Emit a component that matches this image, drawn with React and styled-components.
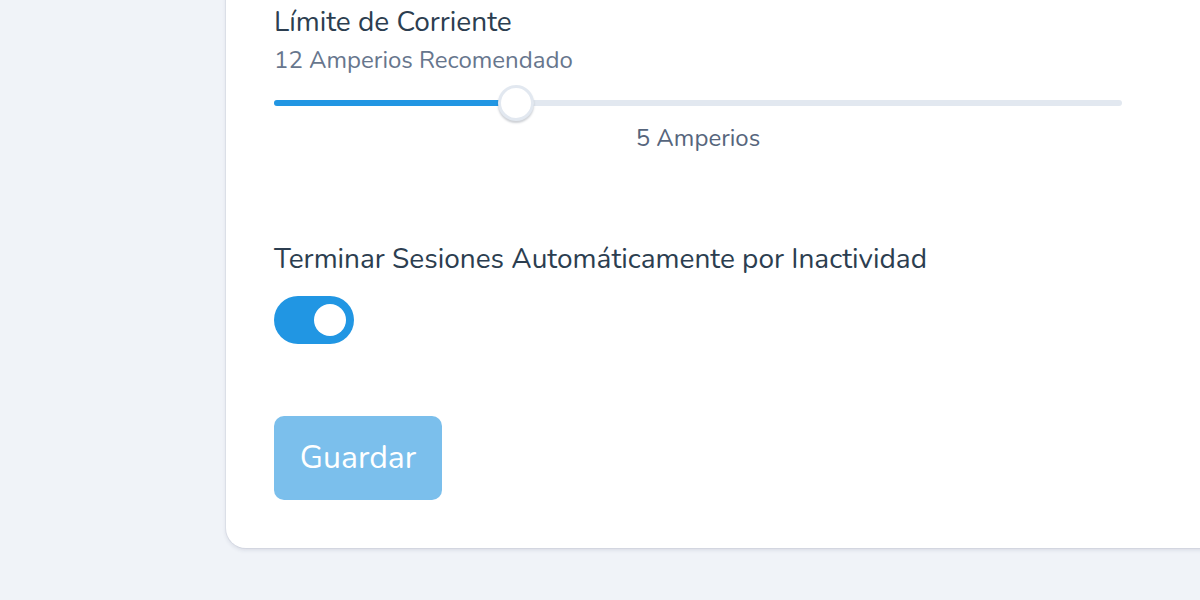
import React, { useState } from "react";
import styled, { createGlobalStyle } from "styled-components";

const Global = createGlobalStyle`
  html, body {
    margin: 0;
    padding: 0;
    background: #f0f3f8;
    overflow: hidden;
    font-family: "Nunito", "Lato", "Noto Sans", sans-serif;
  }
  * { box-sizing: border-box; }
`;

const Page = styled.div`
  width: 1200px;
  height: 600px;
  overflow: hidden;
  padding-left: 226px;
`;

const Card = styled.section`
  margin-top: -40px;
  width: 1040px;
  background: #ffffff;
  border-radius: 20px;
  box-shadow: 0 2px 4px rgba(30, 45, 80, 0.12), 0 0 0 1px rgba(30, 45, 80, 0.05);
  padding: 46px 48px 48px;
`;

const Content = styled.div`
  width: 848px;
  display: flex;
  flex-direction: column;
`;

const Title = styled.h3`
  margin: 0;
  font-size: 28px;
  line-height: 32px;
  font-weight: 400;
  color: #2c3e50;
`;

const Hint = styled.p`
  margin: 6px 0 0;
  font-size: 24px;
  line-height: 32px;
  color: #67768d;
`;

const SliderWrap = styled.div`
  position: relative;
  height: 38px;
  margin-top: 8px;
  display: flex;
  align-items: center;
`;

const Track = styled.div`
  width: 100%;
  height: 6px;
  border-radius: 3px;
  background: #e2e8f0;
  position: relative;
`;

const Fill = styled.div`
  height: 100%;
  border-radius: 3px;
  background: #2196e3;
`;

const Thumb = styled.div`
  position: absolute;
  top: 50%;
  width: 36px;
  height: 36px;
  margin-left: -18px;
  margin-top: -18px;
  border-radius: 50%;
  background: #ffffff;
  border: 3px solid #e2e8f0;
  box-shadow: 0 2px 2px rgba(60, 70, 90, 0.25);
`;

const Value = styled.div`
  text-align: center;
  font-size: 24px;
  line-height: 32px;
  color: #56657c;
`;

const Label = styled.div`
  margin-top: 87px;
  font-size: 28px;
  line-height: 36px;
  color: #2c3e50;
`;

const Switch = styled.button`
  margin-top: 19px;
  width: 80px;
  height: 48px;
  border: none;
  padding: 0;
  border-radius: 24px;
  background: ${(p) => (p.$on ? "#2196e3" : "#cbd5e0")};
  position: relative;
  cursor: pointer;
  &::after {
    content: "";
    position: absolute;
    top: 8px;
    left: ${(p) => (p.$on ? "40px" : "8px")};
    width: 32px;
    height: 32px;
    border-radius: 50%;
    background: #ffffff;
  }
`;

const SaveButton = styled.button`
  margin-top: 72px;
  align-self: flex-start;
  width: 168px;
  height: 84px;
  border: none;
  border-radius: 10px;
  padding: 0 0 2px;
  background: #7bbfec;
  color: #ffffff;
  font-family: inherit;
  font-size: 32px;
  cursor: pointer;
`;

export default function App() {
  const [on, setOn] = useState(true);
  const pct = (516 - 274) / 848 * 100;
  return (
    <Page>
      <Global />
      <Card>
        <Content>
          <Title>Límite de Corriente</Title>
          <Hint>12 Amperios Recomendado</Hint>
          <SliderWrap>
            <Track>
              <Fill style={{ width: `${pct}%` }} />
            </Track>
            <Thumb style={{ left: `${pct}%` }} />
          </SliderWrap>
          <Value>5 Amperios</Value>
          <Label>Terminar Sesiones Automáticamente por Inactividad</Label>
          <Switch $on={on} onClick={() => setOn(!on)} aria-label="toggle" />
          <SaveButton>Guardar</SaveButton>
        </Content>
      </Card>
    </Page>
  );
}
